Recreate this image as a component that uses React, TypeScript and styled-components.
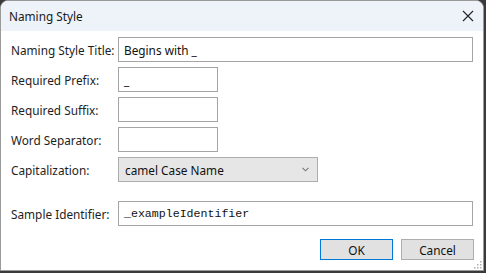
import React from "react";
import styled, { createGlobalStyle } from "styled-components";

const Global = createGlobalStyle`
  html, body { margin: 0; padding: 0; background: #3a3a3a; }
  body { width: 486px; height: 273px; overflow: hidden; }
  * { box-sizing: border-box; }
`;

const Window = styled.div`
  width: 484px;
  height: 271px;
  background: #ffffff;
  border: 1px solid #9a9a9a;
  border-radius: 8px 8px 0 0;
  display: flex;
  flex-direction: column;
  font-family: "Segoe UI", "Noto Sans", "Open Sans", sans-serif;
  font-size: 11.8px;
  color: #1b1b1b;
  overflow: hidden;
  position: relative;
`;

const TitleBar = styled.div`
  height: 30px;
  flex: none;
  background: #eef2f9;
  display: flex;
  align-items: center;
  justify-content: space-between;
  padding: 0 8px 0 8px;
`;

const Title = styled.span`
  font-size: 11.8px;
  color: #1a1a1a;
`;

const CloseButton = styled.span`
  width: 12px;
  height: 12px;
  display: flex;
  margin-right: 1px;
`;

const Body = styled.div`
  flex: 1;
  display: flex;
  flex-direction: column;
  padding: 6px 10px 0 10px;
`;

const Form = styled.div`
  display: grid;
  grid-template-columns: 107px 1fr;
  row-gap: 5px;
  align-items: center;
`;

const Label = styled.label<{ $gapTop?: number }>`
  color: #1e1e1e;
  white-space: nowrap;
  margin-top: ${(p) => p.$gapTop ?? 0}px;
`;

const Input = styled.div<{ $width?: number; $mono?: boolean; $gapTop?: number }>`
  height: 25px;
  width: ${(p) => (p.$width ? `${p.$width}px` : "100%")};
  border: 1px solid #a5a5a5;
  background: #fff;
  display: flex;
  align-items: center;
  padding: 0 5px;
  margin-top: ${(p) => p.$gapTop ?? 0}px;
  font-family: ${(p) =>
    p.$mono ? `"Liberation Mono", "DejaVu Sans Mono", monospace` : "inherit"};
  font-size: ${(p) => (p.$mono ? "11.6px" : "11.8px")};
  color: #111;
`;

const Select = styled.div`
  height: 25px;
  width: 200px;
  border: 1px solid #adadad;
  background: #e6e6e6;
  display: flex;
  align-items: center;
  justify-content: space-between;
  padding: 0 8px 0 6px;
  color: #111;
`;

const Footer = styled.div`
  display: flex;
  justify-content: flex-end;
  gap: 8px;
  margin-top: 13px;
  margin-right: -1px;
`;

const Button = styled.button<{ $primary?: boolean }>`
  width: 73px;
  height: 21px;
  border: 1px solid ${(p) => (p.$primary ? "#0078d7" : "#adadad")};
  background: #e1e1e1;
  font-family: inherit;
  font-size: 11.8px;
  color: #111;
  padding: 0;
`;

const Grip = styled.svg`
  position: absolute;
  right: 1px;
  bottom: 1px;
`;

export default function App() {
  return (
    <>
      <Global />
      <Window>
        <TitleBar>
          <Title>Naming Style</Title>
          <CloseButton>
            <svg width="12" height="12" viewBox="0 0 12 12">
              <path d="M1 1 L11 11 M11 1 L1 11" stroke="#222" strokeWidth="1.1" />
            </svg>
          </CloseButton>
        </TitleBar>
        <Body>
          <Form>
            <Label>Naming Style Title:</Label>
            <Input>Begins with _</Input>
            <Label>Required Prefix:</Label>
            <Input $width={100}>_</Input>
            <Label>Required Suffix:</Label>
            <Input $width={100} />
            <Label>Word Separator:</Label>
            <Input $width={100} />
            <Label>Capitalization:</Label>
            <Select>
              <span>camel Case Name</span>
              <svg width="7" height="5" viewBox="0 0 7 5">
                <path d="M0.5 0.8 L3.5 3.8 L6.5 0.8" stroke="#777" strokeWidth="1.1" fill="none" />
              </svg>
            </Select>
            <Label $gapTop={14}>Sample Identifier:</Label>
            <Input $mono $gapTop={14}>_exampleIdentifier</Input>
          </Form>
          <Footer>
            <Button $primary>OK</Button>
            <Button>Cancel</Button>
          </Footer>
        </Body>
        <Grip width="10" height="10" viewBox="0 0 10 10">
          {[
            [8, 2], [8, 5], [8, 8], [5, 5], [5, 8], [2, 8],
          ].map(([x, y], i) => (
            <rect key={i} x={x} y={y} width="1.5" height="1.5" fill="#b0b0b0" />
          ))}
        </Grip>
      </Window>
    </>
  );
}
